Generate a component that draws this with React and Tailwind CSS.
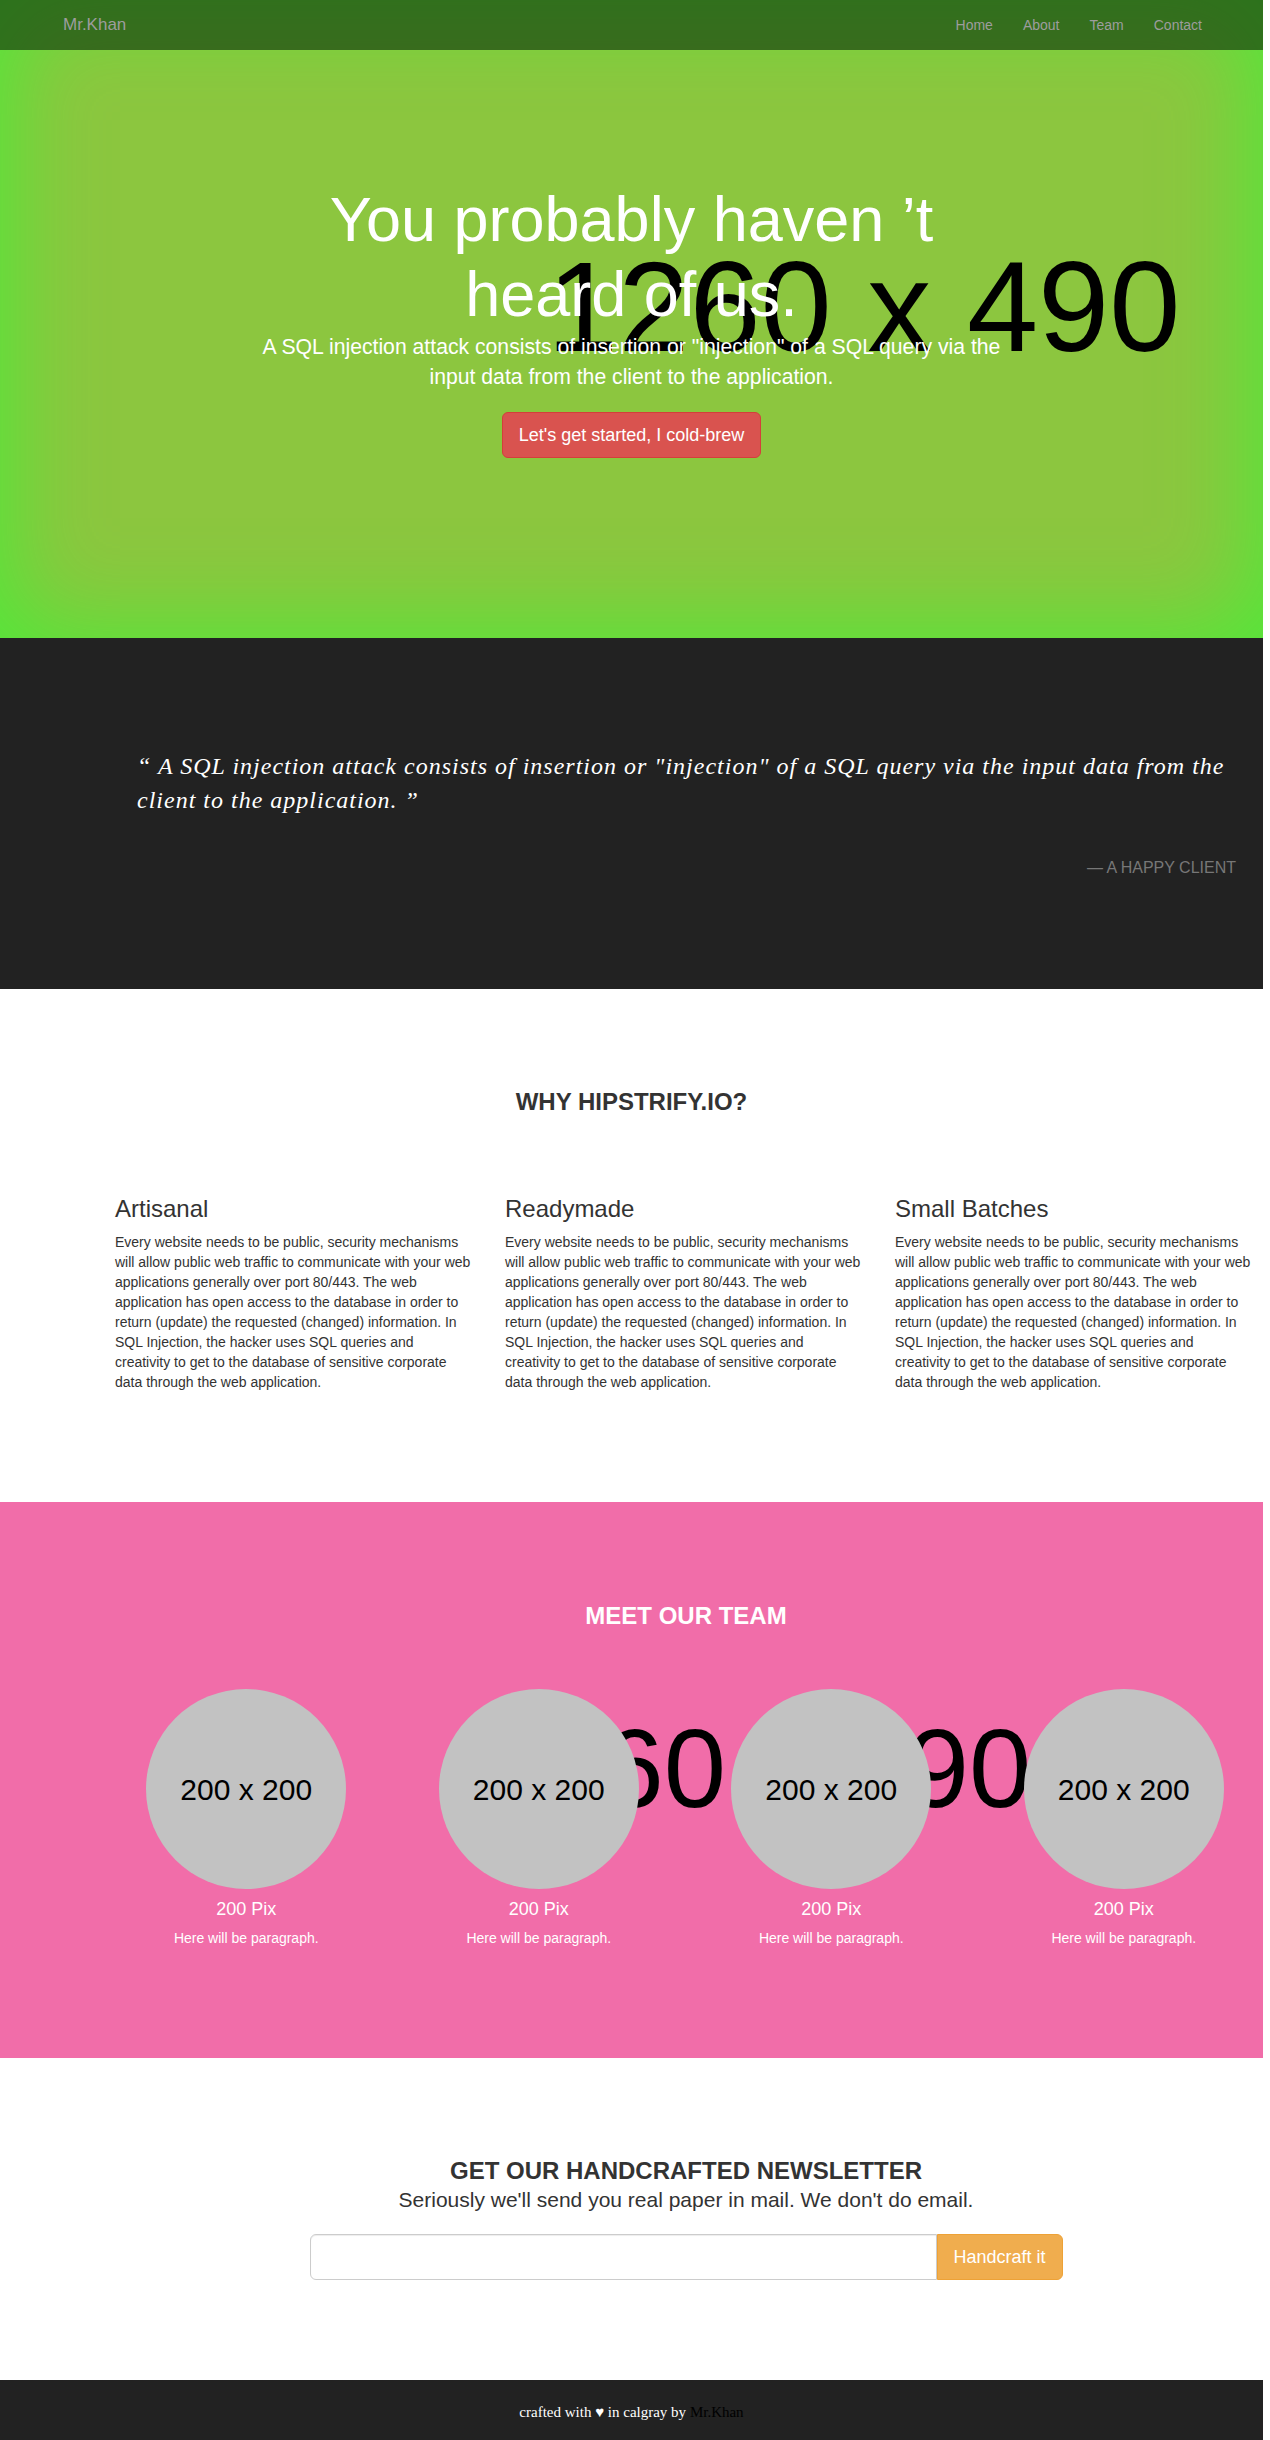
export default function App() {
  const team = [1, 2, 3, 4];
  const cols = ["Artisanal", "Readymade", "Small Batches"];
  const body =
    "Every website needs to be public, security mechanisms will allow public web traffic to communicate with your web applications generally over port 80/443. The web application has open access to the database in order to return (update) the requested (changed) information. In SQL Injection, the hacker uses SQL queries and creativity to get to the database of sensitive corporate data through the web application.";
  return (
    <div className="w-[1263px] font-['Liberation_Sans',Arial,sans-serif] text-[#333]">
      {/* HERO + NAV */}
      <section className="relative h-[638px] overflow-hidden bg-[#8cc63f] shadow-[inset_0_0_90px_12px_#52e83a]">
        <div className="absolute left-[547px] top-[243px] text-[128px] leading-none text-black whitespace-nowrap select-none">
          1260 x 490
        </div>
        <nav className="absolute top-0 inset-x-0 h-[50px] flex items-center justify-between pl-[63px] pr-[46px] bg-[rgba(26,67,16,0.7)]">
          <span className="text-[17px] text-[#9d9d9d]">Mr.Khan</span>
          <ul className="flex text-[14px] text-[#9d9d9d]">
            <li className="px-[15px]">Home</li>
            <li className="px-[15px]">About</li>
            <li className="px-[15px]">Team</li>
            <li className="px-[15px]">Contact</li>
          </ul>
        </nav>
        <div className="relative pt-[182px] w-[760px] mx-auto text-center text-white">
          <h1 className="text-[63px] leading-[75px]">You probably haven ’t heard of us.</h1>
          <p className="text-[21.2px] leading-[30px]">
            A SQL injection attack consists of insertion or "injection" of a SQL query via the input data from the client to the application.
          </p>
          <button className="mt-[20px] h-[46px] px-[16px] rounded-[6px] bg-[#d9534f] border border-[#d43f3a] text-white text-[18px]">
            Let's get started, I cold-brew
          </button>
        </div>
      </section>

      {/* QUOTE */}
      <section className="h-[351px] bg-[#222222] pt-[111px] pl-[137px] pr-[27px]">
        <blockquote className="font-['Liberation_Serif','Times_New_Roman',serif] italic text-white text-[24px] leading-[34px] tracking-[1px]">
          “ A SQL injection attack consists of insertion or "injection" of a SQL query via the input data from the client to the application. ”
        </blockquote>
        <div className="mt-[41px] text-right text-[16px] leading-[20px] text-[#777777] uppercase">— A Happy Client</div>
      </section>

      {/* WHY */}
      <section className="h-[513px] bg-white pt-[100px]">
        <h2 className="text-center text-[24px] leading-[26px] font-bold text-[#333]">WHY HIPSTRIFY.IO?</h2>
        <div className="ml-[100px] mt-[81px] grid grid-cols-[390px_390px_390px]">
          {cols.map((c) => (
            <div key={c} className="px-[15px]">
              <h3 className="text-[24px] leading-[26px] mb-[10px] text-[#333]">{c}</h3>
              <p className="w-[356px] text-[14px] leading-[20px] text-[#333]">{body}</p>
            </div>
          ))}
        </div>
      </section>

      {/* TEAM */}
      <section className="relative h-[556px] overflow-hidden bg-[#f16da9] pt-[101px]">
        <div className="absolute left-[477px] top-[211px] text-[112px] leading-none text-black whitespace-nowrap select-none">
          1260 x 490
        </div>
        <div className="relative ml-[100px] w-[1172px] text-center text-white text-[24px] leading-[26px] font-bold">MEET OUR TEAM</div>
        <div className="relative ml-[100px] mt-[60px] w-[1170px] grid grid-cols-4">
          {team.map((t) => (
            <div key={t} className="flex flex-col items-center text-white">
              <div className="w-[200px] h-[200px] rounded-full bg-[#c2c2c2] flex items-center justify-center text-black text-[30px]">
                200 x 200
              </div>
              <div className="mt-[10px] text-[18px] leading-[20px]">200 Pix</div>
              <p className="mt-[9px] text-[14px] leading-[20px]">Here will be paragraph.</p>
            </div>
          ))}
        </div>
      </section>

      {/* NEWSLETTER */}
      <section className="h-[322px] bg-white pt-[100px]">
        <div className="ml-[100px] w-[1172px] text-center">
          <h2 className="text-[24px] leading-[26px] font-bold text-[#333]">GET OUR HANDCRAFTED NEWSLETTER</h2>
          <p className="mt-[1px] text-[21px] leading-[30px] text-[#333]">Seriously we'll send you real paper in mail. We don't do email.</p>
          <div className="mt-[19px] mx-auto w-[753px] h-[46px] flex">
            <input
              type="text"
              className="flex-1 h-full border border-[#cccccc] rounded-l-[6px] bg-white shadow-[inset_0_1px_1px_rgba(0,0,0,0.075)] outline-none px-4"
            />
            <button className="w-[126px] h-full bg-[#f0ad4e] border border-[#eea236] rounded-r-[6px] text-white text-[18px]">
              Handcraft it
            </button>
          </div>
        </div>
      </section>

      {/* FOOTER */}
      <footer className="h-[60px] bg-[#222222] flex items-center justify-center pt-[4px] font-['Liberation_Serif','Times_New_Roman',serif] text-[15px] text-white">
        <span>
          crafted with ♥ in calgray by <span className="text-black">Mr.Khan</span>
        </span>
      </footer>
    </div>
  );
}
